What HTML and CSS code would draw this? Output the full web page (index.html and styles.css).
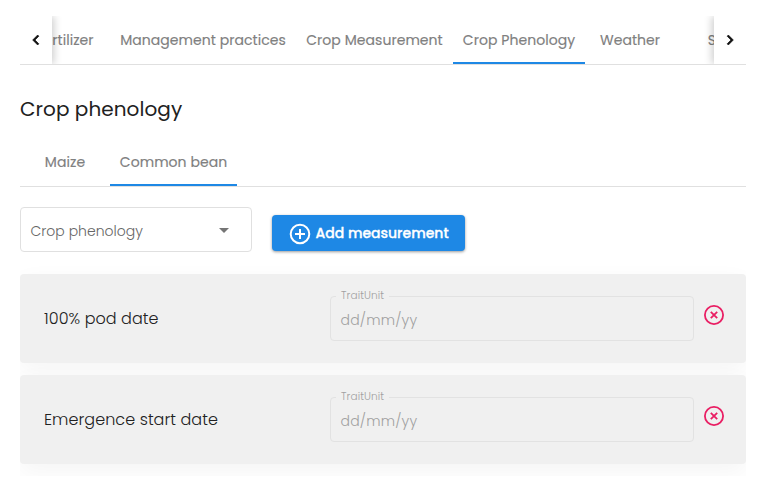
FILE: index.html
```html
<!DOCTYPE html>
<html lang="en">
<head>
<meta charset="utf-8">
<title>Crop phenology</title>
<link rel="stylesheet" href="styles.css">
</head>
<body>
<main class="page">
  <nav class="tabs">
    <button class="scroll scroll-left" aria-label="Previous"><svg width="20" height="20" viewBox="0 0 24 24"><path d="M15.41 7.41 14 6l-6 6 6 6 1.41-1.41L10.83 12z"/></svg></button>
    <div class="track">
      <div class="tab fertilizer"><span>Fertilizer</span></div>
      <div class="tab management"><span>Management practices</span></div>
      <div class="tab crop-measurement"><span>Crop Measurement</span></div>
      <div class="tab crop-phenology active"><span>Crop Phenology</span></div>
      <div class="tab weather"><span>Weather</span></div>
      <div class="tab soil"><span>Soil</span></div>
    </div>
    <button class="scroll scroll-right" aria-label="Next"><svg width="20" height="20" viewBox="0 0 24 24"><path d="M10 6 8.59 7.41 13.17 12l-4.58 4.59L10 18l6-6z"/></svg></button>
  </nav>
  <h1><span>Crop phenology</span></h1>
  <nav class="tabs crops">
    <div class="tab maize"><span>Maize</span></div>
    <div class="tab bean active"><span>Common bean</span></div>
  </nav>
  <div class="toolbar">
    <div class="select"><span>Crop phenology</span><svg width="24" height="24" viewBox="0 0 24 24"><path d="m7 9 5 5 5-5z"/></svg></div>
    <button class="add"><svg width="22" height="22" viewBox="0 0 22 22"><circle cx="11" cy="11" r="9.3"/><path d="M11 6v10M6 11h10"/></svg><span>Add measurement</span></button>
  </div>
  <section class="list">
    <article class="card">
      <span class="name">100% pod date</span>
      <fieldset><legend>TraitUnit</legend><span class="placeholder">dd/mm/yy</span></fieldset>
      <svg class="remove" width="20" height="20" viewBox="0 0 20 20"><circle cx="10" cy="10" r="9.1"/><path d="m6.8 6.8 6.4 6.4m0-6.4-6.4 6.4"/></svg>
    </article>
    <article class="card">
      <span class="name">Emergence start date</span>
      <fieldset><legend>TraitUnit</legend><span class="placeholder">dd/mm/yy</span></fieldset>
      <svg class="remove" width="20" height="20" viewBox="0 0 20 20"><circle cx="10" cy="10" r="9.1"/><path d="m6.8 6.8 6.4 6.4m0-6.4-6.4 6.4"/></svg>
    </article>
  </section>
</main>
</body>
</html>
```
FILE: styles.css
```css
* { box-sizing: border-box; }
body { margin: 0; background: #fff; color: #212121; font-family: Poppins, Inter, sans-serif; }
button { border: 0; padding: 0; font: inherit; }
span { white-space: nowrap; }
.page { width: 726px; margin-left: 20px; padding-top: 16px; }
.tabs { display: flex; height: 49px; border-bottom: 1px solid #e0e0e0; }
.scroll { display: flex; align-items: center; justify-content: center; width: 32px; background: #fff; z-index: 1; }
.scroll-left { box-shadow: 2px 0 8px rgba(0,0,0,.2); clip-path: inset(0 -12px 0 0); }
.scroll-right { box-shadow: -2px 0 8px rgba(0,0,0,.2); clip-path: inset(0 0 0 -12px); }
.scroll path { fill: #111; stroke: #111; stroke-width: .8; }
.track { display: flex; flex: 1; min-width: 0; overflow: hidden; }
.tab { display: flex; flex: none; align-items: center; justify-content: center; height: 48px; border-bottom: 2px solid transparent; padding-top: 2px; color: #808080; font-size: 14px; letter-spacing: .05px; -webkit-text-stroke: .15px; }
.tab.active { border-color: #1e88e5; }
.fertilizer { width: 90px; margin-left: -32px; }
.management { width: 186px; }
.crop-measurement { width: 157px; }
.crop-phenology { width: 132px; }
.weather, .soil { width: 90px; }
h1 { margin: 28px 0 0; height: 32px; line-height: 32px; font-size: 20px; font-weight: 400; letter-spacing: .06px; }
.crops { margin-top: 13px; }
.maize { width: 90px; }
.bean { width: 127px; }
.toolbar { display: flex; align-items: flex-start; padding-top: 20px; height: 72px; }
.select { display: flex; align-items: center; justify-content: space-between; width: 232px; height: 45px; border: 1px solid #e0e0e0; border-radius: 4px; padding: 3px 15px 0 9.5px; color: #666; font-size: 14px; font-weight: 300; }
.select path { fill: #757575; }
.add { display: flex; align-items: center; width: 193px; height: 36px; margin: 8px 0 0 20px; padding-left: 17px; border-radius: 4px; background: #1e88e5; color: #fff; font-size: 14px; font-weight: 500; -webkit-text-stroke: .3px #fff; box-shadow: 0 1px 3px rgba(0,0,0,.4); }
.add svg { fill: none; stroke: #fff; stroke-width: 2; margin: 2px 4.5px 0 0; }
.list { display: grid; gap: 12px; margin-top: -16px; padding: 31px 0 12px; overflow: hidden; }
.card { display: flex; height: 89px; padding: 0 22px 0 24px; border-radius: 4px; background: #f0f0f0; box-shadow: 0 8px 24px rgba(0,0,0,.045); }
.name { width: 286px; line-height: 89px; font-size: 16px; font-weight: 300; letter-spacing: .05px; }
fieldset { width: 364px; height: 50px; margin: 17px 0 0; padding: 0 9.5px; border: 1px solid #e2e2e2; border-radius: 4px; min-width: 0; color: #a0a0a0; font-weight: 300; }
legend { margin-left: -4.5px; padding: 0 5px; height: 10px; line-height: 10px; font-size: 10.5px; letter-spacing: .1px; }
.placeholder { display: block; line-height: 38px; font-size: 14px; letter-spacing: .2px; }
.remove { margin: 31px 0 0 10px; fill: none; stroke: #e91e63; stroke-width: 1.8; }
```
